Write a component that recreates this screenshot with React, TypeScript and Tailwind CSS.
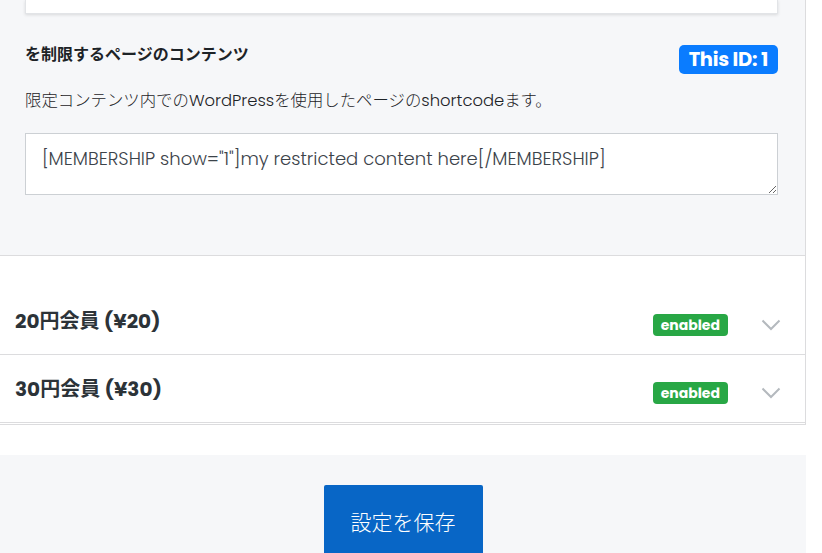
import React from 'react';

const font = { fontFamily: 'Poppins, Inter, "Noto Sans CJK JP", sans-serif' };

// ── pieces ───────────────────────────────────────────────────────────────────

function Chevron() {
    return (
        <svg width="20" height="12" viewBox="0 0 20 12" fill="none" className="text-[#b4b9be]">
            <path d="M1.5 1.5 L10 10 L18.5 1.5" stroke="currentColor" strokeWidth="2" />
        </svg>
    );
}

function PlanRow({ title }: { title: string }) {
    return (
        <div className="h-[68px] border-b border-[#dcdcde] flex items-center pl-[15px] pr-[24px]">
            <h3 className="flex-1 text-[20px] font-bold text-[#2c3338] leading-6">{title}</h3>
            <div className="flex items-center gap-[33px] mt-[9px]">
                <span className="bg-[#28a745] text-white text-[14px] font-bold rounded-[4px] px-[8px] h-[22px] flex items-center leading-none">
                    enabled
                </span>
                <Chevron />
            </div>
        </div>
    );
}

// ── page ─────────────────────────────────────────────────────────────────────

export default function App() {
    return (
        <div className="bg-white min-h-[553px] overflow-hidden" style={font}>
            <div className="w-[806px] border-r border-[#dcdcde]">
                {/* Restricted content section */}
                <div className="bg-[#f6f7f9] pl-[25px] pr-[27px] pb-[60px] border-b border-[#dcdcde]">
                    <div className="h-[14px] bg-white shadow-[0_1px_3px_rgba(0,0,0,0.12)] border-x border-b border-[#e2e4e7]" />

                    <div className="flex items-start justify-between mt-[31px]">
                        <h2 className="text-[16px] font-bold text-[#1d2327] leading-5">を制限するページのコンテンツ</h2>
                        <span className="bg-[#0a7cff] text-white text-[19.5px] font-bold rounded-[5px] h-[29px] px-[10px] flex items-center leading-none tracking-[-0.3px]">
                            This ID: 1
                        </span>
                    </div>

                    <p className="mt-[17px] text-[16.4px] font-light text-[#1d2327] leading-5">
                        限定コンテンツ内でのWordPressを使用したページのshortcodeます。
                    </p>

                    <textarea
                        readOnly
                        defaultValue={'[MEMBERSHIP show="1"]my restricted content here[/MEMBERSHIP]'}
                        className="mt-[22px] block w-full h-[62px] bg-white border border-[#ccd0d4] px-[16px] pt-[13px] text-[18px] font-light text-[#3c434a] leading-6 outline-none"
                        style={font}
                    />
                </div>

                {/* Plans */}
                <div className="pt-[31px] border-b border-[#dcdcde] pb-[1px]">
                    <PlanRow title="20円会員 (¥20)" />
                    <PlanRow title="30円会員 (¥30)" />
                </div>
            </div>

            {/* Footer */}
            <div className="w-[806px] mt-[30px] bg-[#f6f7f9] pt-[30px] flex justify-center">
                <button className="bg-[#0866c6] text-white text-[21px] font-light h-[80px] px-[27px] rounded-t-[2px] flex items-start pt-[22px]" style={font}>
                    設定を保存
                </button>
            </div>
        </div>
    );
}
